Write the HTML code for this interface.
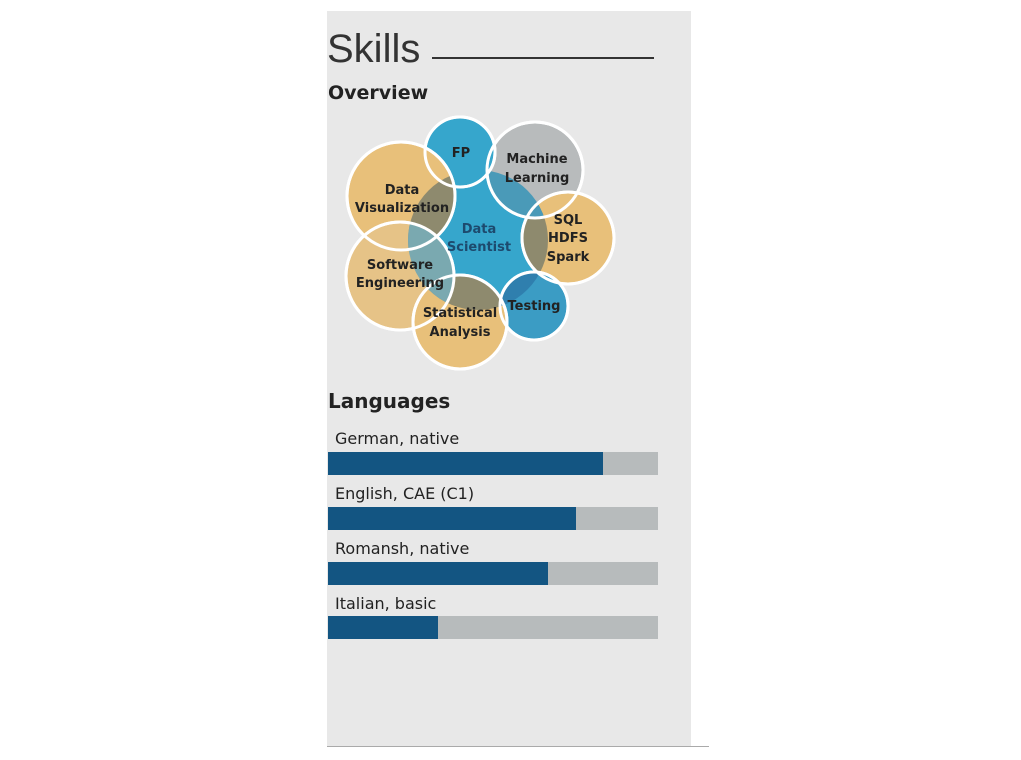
<!DOCTYPE html>
<html><head><style>
body{margin:0;background:#fff;width:1021px;height:760px;position:relative;font-family:"DejaVu Sans","Liberation Sans",sans-serif;overflow:hidden}
.panel{position:absolute;left:327px;top:11px;width:364px;height:735px;background:#e8e8e8}
.line{position:absolute;left:327px;top:746px;width:382px;height:1px;background:#aaa}
h1{position:absolute;left:327px;top:27px;margin:0;font:normal 40px "Liberation Sans",sans-serif;color:#333}
.rule{position:absolute;left:432px;top:57px;width:222px;height:2px;background:#333}
.h2{position:absolute;left:328px;margin:0;font-weight:bold;color:#222}
.lab{position:absolute;left:335px;font-size:16px;color:#222}
.bar{position:absolute;left:328px;width:330px;height:23px;background:#b7bbbc}
.bar div{height:100%;background:#135582}
svg{position:absolute;left:0;top:0}
</style></head><body>
<div class="panel"></div><div class="line"></div>
<h1>Skills</h1><div class="rule"></div>
<div class="h2" style="top:82px;font-size:19px">Overview</div>
<svg width="1021" height="400" font-family="DejaVu Sans,sans-serif" font-weight="bold" font-size="13" fill="#222" text-anchor="middle">
<defs><clipPath id="c"><circle cx="478" cy="240" r="70"/></clipPath></defs>
<circle cx="478" cy="240" r="70" fill="#36a6cc"/>
<g stroke="#fff" stroke-width="3">
<circle cx="535" cy="170" r="48" fill="#b8bbbc"/>
<circle cx="460" cy="152" r="35" fill="#36a6cc"/>
<circle cx="401" cy="196" r="54" fill="#e8c07a"/>
<circle cx="400" cy="276" r="54" fill="#e6c387"/>
<circle cx="568" cy="238" r="46" fill="#e8c07a"/>
<circle cx="534" cy="306" r="34" fill="#3b9cc4"/>
<circle cx="460" cy="322" r="47" fill="#e8c07a"/>
</g>
<g clip-path="url(#c)" fill="#8e8a6e">
<circle cx="401" cy="196" r="53"/>
<circle cx="568" cy="238" r="45"/>
<circle cx="460" cy="322" r="46"/>
</g>
<g clip-path="url(#c)"><circle cx="535" cy="170" r="47" fill="#4a9ab8"/><circle cx="400" cy="276" r="53" fill="#7aa9b0"/><circle cx="534" cy="306" r="33" fill="#2f7fae"/></g>
<g stroke="#fff" stroke-width="3" fill="none">
<circle cx="535" cy="170" r="48"/><circle cx="460" cy="152" r="35"/><circle cx="401" cy="196" r="54"/><circle cx="400" cy="276" r="54"/><circle cx="534" cy="306" r="34"/><circle cx="460" cy="322" r="47"/><circle cx="568" cy="238" r="46"/>
</g>
<text x="461" y="157">FP</text>
<text x="537" y="163">Machine</text><text x="537" y="182">Learning</text>
<text x="402" y="194">Data</text><text x="402" y="212">Visualization</text>
<text x="479" y="233" fill="#1d4a6e">Data</text><text x="479" y="251" fill="#1d4a6e">Scientist</text>
<text x="568" y="224">SQL</text><text x="568" y="242">HDFS</text><text x="568" y="261">Spark</text>
<text x="400" y="269">Software</text><text x="400" y="287">Engineering</text>
<text x="534" y="310">Testing</text>
<text x="460" y="317">Statistical</text><text x="460" y="336">Analysis</text>
</svg>
<div class="h2" style="top:389px;font-size:20px">Languages</div>
<div class="lab" style="top:429px">German, native</div>
<div class="bar" style="top:452px"><div style="width:275px"></div></div>
<div class="lab" style="top:484px">English, CAE (C1)</div>
<div class="bar" style="top:507px"><div style="width:248px"></div></div>
<div class="lab" style="top:539px">Romansh, native</div>
<div class="bar" style="top:562px"><div style="width:220px"></div></div>
<div class="lab" style="top:594px">Italian, basic</div>
<div class="bar" style="top:616px"><div style="width:110px"></div></div>
</body></html>
